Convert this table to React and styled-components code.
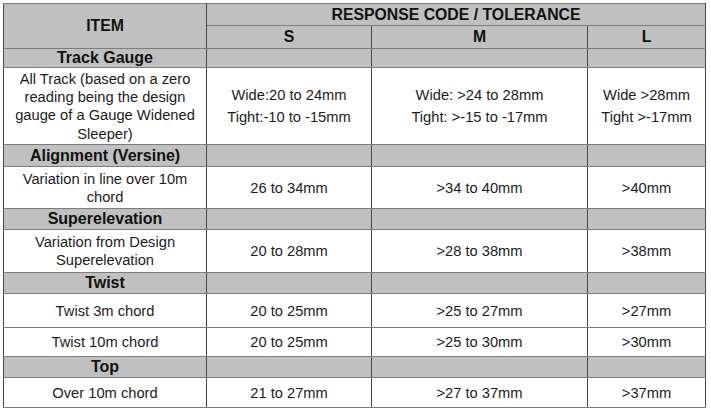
import React from "react";
import styled, { createGlobalStyle } from "styled-components";

const GlobalStyle = createGlobalStyle`
  html, body {
    margin: 0;
    padding: 0;
    background: #ffffff;
  }
  body {
    font-family: "Liberation Sans", Arial, sans-serif;
    color: #1c1c1c;
  }
`;

const Page = styled.div`
  padding: 3px 0 0 3px;
  width: 711px;
  height: 410px;
  box-sizing: border-box;
`;

const Table = styled.table`
  border-collapse: collapse;
  table-layout: fixed;
  width: 702px;
`;

const Cell = styled.td`
  border-top: 1px solid #7c7c7c;
  border-bottom: 1px solid #7c7c7c;
  border-left: 1px solid #474747;
  border-right: 1px solid #474747;
  padding: 0 3px;
  height: ${(p) => p.$h}px;
  text-align: center;
  vertical-align: middle;
  background: ${(p) => (p.$shade ? "#c0c0c0" : "#ffffff")};
  font-size: 14.7px;
  line-height: 18.3px;
  font-weight: normal;
  box-sizing: border-box;
`;

const HeadCell = styled(Cell).attrs({ as: "th" })`
  font-weight: bold;
  font-size: 15.8px;
  line-height: 18px;
  color: #111;
`;

const CatCell = styled(Cell)`
  font-weight: bold;
  font-size: 16px;
  color: #111;
`;

const Stack = styled.div`
  line-height: 22px;
`;

const rows = [
  {
    title: "Track Gauge",
    catH: 19,
    items: [
      {
        h: 77,
        label: "All Track (based on a zero reading being the design gauge of a Gauge Widened Sleeper)",
        s: ["Wide:20 to 24mm", "Tight:-10 to -15mm"],
        m: ["Wide: >24 to 28mm", "Tight: >-15 to -17mm"],
        l: ["Wide >28mm", "Tight >-17mm"],
      },
    ],
  },
  {
    title: "Alignment (Versine)",
    catH: 22,
    items: [
      { h: 42, label: "Variation in line over 10m chord", s: ["26 to 34mm"], m: [">34 to 40mm"], l: [">40mm"] },
    ],
  },
  {
    title: "Superelevation",
    catH: 21,
    items: [
      { h: 43, label: "Variation from Design Superelevation", s: ["20 to 28mm"], m: [">28 to 38mm"], l: [">38mm"] },
    ],
  },
  {
    title: "Twist",
    catH: 21,
    items: [
      { h: 34, label: "Twist 3m chord", s: ["20 to 25mm"], m: [">25 to 27mm"], l: [">27mm"] },
      { h: 29, label: "Twist 10m chord", s: ["20 to 25mm"], m: [">25 to 30mm"], l: [">30mm"] },
    ],
  },
  {
    title: "Top",
    catH: 21,
    items: [
      { h: 30, label: "Over 10m chord", s: ["21 to 27mm"], m: [">27 to 37mm"], l: [">37mm"] },
    ],
  },
];

function Values({ lines }) {
  if (lines.length === 1) return lines[0];
  return (
    <Stack>
      {lines.map((t) => (
        <div key={t}>{t}</div>
      ))}
    </Stack>
  );
}

export default function App() {
  return (
    <Page>
      <GlobalStyle />
      <Table>
        <colgroup>
          <col style={{ width: 203 }} />
          <col style={{ width: 165 }} />
          <col style={{ width: 216 }} />
          <col style={{ width: 118 }} />
        </colgroup>
        <thead>
          <tr>
            <HeadCell $shade $h={45} rowSpan={2}>
              ITEM
            </HeadCell>
            <HeadCell $shade $h={22} colSpan={3}>
              RESPONSE CODE / TOLERANCE
            </HeadCell>
          </tr>
          <tr>
            <HeadCell $shade $h={23}>S</HeadCell>
            <HeadCell $shade $h={23}>M</HeadCell>
            <HeadCell $shade $h={23}>L</HeadCell>
          </tr>
        </thead>
        <tbody>
          {rows.map((group) => (
            <React.Fragment key={group.title}>
              <tr>
                <CatCell $shade $h={group.catH}>{group.title}</CatCell>
                <CatCell $shade $h={group.catH} />
                <CatCell $shade $h={group.catH} />
                <CatCell $shade $h={group.catH} />
              </tr>
              {group.items.map((it) => (
                <tr key={it.label}>
                  <Cell $h={it.h}>{it.label}</Cell>
                  <Cell $h={it.h}>
                    <Values lines={it.s} />
                  </Cell>
                  <Cell $h={it.h}>
                    <Values lines={it.m} />
                  </Cell>
                  <Cell $h={it.h}>
                    <Values lines={it.l} />
                  </Cell>
                </tr>
              ))}
            </React.Fragment>
          ))}
        </tbody>
      </Table>
    </Page>
  );
}
